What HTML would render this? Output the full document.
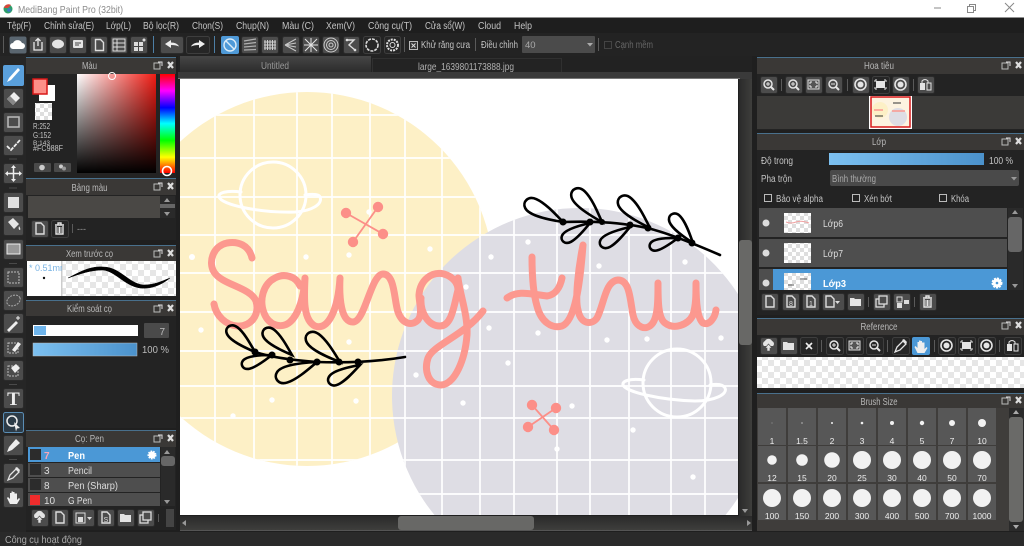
<!DOCTYPE html>
<html><head><meta charset="utf-8"><title>MediBang Paint Pro</title>
<style>
html,body{margin:0;padding:0;background:#1f1f1f;overflow:hidden;width:1024px;height:546px}
svg{display:block;overflow:hidden;font-family:"Liberation Sans","Noto Sans CJK SC",sans-serif}
text{font-size:10px;fill:#c4c4c4}
.b{fill:#4c4c4c;stroke:#2b2b2b;stroke-width:1}
.d{fill:#262626;stroke:#3e3e3e;stroke-width:1}
.t{fill:#3a3836}
.c{text-anchor:middle;fill:#b8b8b8}
.s{text-anchor:middle;font-size:8.5px;fill:#eee}
.w{fill:#fff}
.k{fill:none;stroke:#000;stroke-width:2.6;stroke-linecap:round;vector-effect:non-scaling-stroke}
.sep{fill:#5a5a5a}
</style></head><body>
<svg width="1024" height="546" viewBox="0 0 1024 546" xmlns="http://www.w3.org/2000/svg">
<defs>
<linearGradient id="sv" x1="0" x2="1" y1="0" y2="0"><stop offset="0" stop-color="#fff"/><stop offset="1" stop-color="#f01c14"/></linearGradient>
<linearGradient id="bk" x1="0" x2="0" y1="0" y2="1"><stop offset="0" stop-color="#000" stop-opacity="0"/><stop offset="1" stop-color="#000"/></linearGradient>
<linearGradient id="hue" x1="0" x2="0" y1="0" y2="1"><stop offset="0" stop-color="#f00"/><stop offset=".17" stop-color="#f0f"/><stop offset=".34" stop-color="#00f"/><stop offset=".5" stop-color="#0ff"/><stop offset=".67" stop-color="#0f0"/><stop offset=".84" stop-color="#ff0"/><stop offset="1" stop-color="#f00"/></linearGradient>
<linearGradient id="bl" x1="0" x2="1" y1="0" y2="0"><stop offset="0" stop-color="#7cc0f0"/><stop offset="1" stop-color="#4b92cc"/></linearGradient>
<linearGradient id="sb" x1="0" x2="0" y1="0" y2="1"><stop offset="0" stop-color="#2a2a2a"/><stop offset="1" stop-color="#3e3e3c"/></linearGradient>
<linearGradient id="tab" x1="0" x2="0" y1="0" y2="1"><stop offset="0" stop-color="#464646"/><stop offset="1" stop-color="#2c2c2c"/></linearGradient>
<linearGradient id="sbv" x1="0" x2="1" y1="0" y2="0"><stop offset="0" stop-color="#2a2a2a"/><stop offset="1" stop-color="#3e3e3c"/></linearGradient>
<pattern id="ch" width="12" height="12" patternUnits="userSpaceOnUse"><rect width="12" height="12" fill="#fff"/><rect width="6" height="6" fill="#e6e6e6"/><rect x="6" y="6" width="6" height="6" fill="#e6e6e6"/></pattern>
<pattern id="ch2" width="8" height="8" patternUnits="userSpaceOnUse"><rect width="8" height="8" fill="#fff"/><rect width="4" height="4" fill="#dedede"/><rect x="4" y="4" width="4" height="4" fill="#dedede"/></pattern>
<g id="pt"><rect x="0" y="1" width="6" height="6" fill="none" stroke="#bbb"/><path d="M4 0h4v4" fill="none" stroke="#ddd"/><path d="M14 0l5 6M19 0l-5 6" stroke="#ddd" stroke-width="2.2"/></g>
<path id="leaf" d="M0 0C-20-8-55-24-80-24C-102-24-108-4-96 6C-80 20-30 8 0 0Z" class="k"/>
<g id="doc"><path d="M5 3h5l3 3v8H5z" fill="none" stroke="#ddd" stroke-width="1.4"/></g>
<g id="zp"><circle cx="8" cy="8" r="4" fill="none" stroke="#e4e4e4" stroke-width="1.5"/><path d="M11 11l3 3" stroke="#e4e4e4" stroke-width="2"/><path d="M6 8h4M8 6v4" stroke="#e4e4e4"/></g>
<g id="zm"><circle cx="8" cy="8" r="4" fill="none" stroke="#e4e4e4" stroke-width="1.5"/><path d="M11 11l3 3" stroke="#e4e4e4" stroke-width="2"/><path d="M6 8h4" stroke="#e4e4e4"/></g>
<g id="fit"><rect x="3" y="4" width="11" height="9" fill="#555" stroke="#ddd"/><path d="M5 6h2M5 6v2M12 6h-2M12 6v2M5 11h2M5 11v-2M12 11h-2M12 11v-2" stroke="#eee"/></g>
<g id="rl"><circle cx="8.5" cy="8.5" r="5.5" fill="none" stroke="#e4e4e4" stroke-width="1.6"/><circle cx="8.5" cy="8.5" r="3" fill="#e4e4e4"/></g>
<g id="fr"><rect x="4" y="5" width="9" height="7" fill="#e4e4e4"/><path d="M3 4h2M3 4v2M14 4h-2M14 4v2M3 13h2M3 13v-2M14 13h-2M14 13v-2" stroke="#e4e4e4"/></g>
<g id="fl"><rect x="3" y="7" width="5" height="7" fill="#e4e4e4"/><rect x="10" y="7" width="4" height="7" fill="none" stroke="#e4e4e4"/><path d="M5 7V5q3-3 6 0v2" fill="none" stroke="#e4e4e4"/></g>
<g id="fold"><path d="M3 5h4l1 1h6v7H3z" fill="#e4e4e4"/></g>
<g id="dup"><rect x="3" y="6" width="8" height="8" fill="none" stroke="#ddd" stroke-width="1.3"/><rect x="6" y="3" width="8" height="8" fill="#4c4c4c" stroke="#ddd" stroke-width="1.3"/></g>
<g id="up"><path d="M4 9a3 3 0 0 1 1-5a4 4 0 0 1 7 0a3 3 0 0 1 1 5z" fill="#e4e4e4"/><path d="M8.5 7l3.5 4h-2v3h-3v-3H5z" fill="#e4e4e4" stroke="#4c4c4c" stroke-width=".6"/></g>
<g id="tr"><path d="M4 5h9M7 5V3h3v2M5 6v8h7V6" fill="none" stroke="#e4e4e4" stroke-width="1.4"/><path d="M7 7v6M8.5 7v6M10 7v6" stroke="#e4e4e4"/></g>
<g id="hand"><path d="M5 15L2 9l1-1 2 2V4h1.5v4V2.500h1.500V8V3h1.500v5V4.500H12V11l2-2 1 1-3 5z" fill="#eee"/></g>
<g id="dr"><path d="M3 15l2-5 6-6 3 3-6 6z" fill="none" stroke="#e4e4e4" stroke-width="1.3"/><path d="M10 3l2-1 3 3-1 2z" fill="#e4e4e4"/></g>
</defs>

<!-- base -->
<rect width="1024" height="546" fill="#1f1f1f"/>
<rect width="1024" height="17.500" fill="#fff"/>
<circle cx="8" cy="9" r="4.500" fill="#2e9e6a"/><path d="M4 8a4.500 4.500 0 0 1 7-3l-3 3z" fill="#d9453a"/><circle cx="9" cy="10" r="1.800" fill="#3a78c8"/>
<text x="18" y="13" textLength="105" lengthAdjust="spacingAndGlyphs" style="font-size:10px;fill:#8c8c8c">MediBang Paint Pro (32bit)</text>
<path d="M934 8h7" stroke="#888"/><rect x="967.500" y="6.500" width="6" height="6" fill="none" stroke="#888"/><path d="M969.500 6.500v-2h6v6h-2" fill="none" stroke="#888"/><path d="M1005 3l9 9M1014 3l-9 9" stroke="#888"/>

<!-- menu -->
<rect y="18" width="1024" height="15" fill="#1e1e1e"/>
<text x="7" y="29" textLength="24" lengthAdjust="spacingAndGlyphs">Tệp(F)</text><text x="44" y="29" textLength="50" lengthAdjust="spacingAndGlyphs">Chỉnh sửa(E)</text><text x="106" y="29" textLength="25" lengthAdjust="spacingAndGlyphs">Lớp(L)</text><text x="143" y="29" textLength="36" lengthAdjust="spacingAndGlyphs">Bộ lọc(R)</text><text x="192" y="29" textLength="31" lengthAdjust="spacingAndGlyphs">Chọn(S)</text><text x="236" y="29" textLength="33" lengthAdjust="spacingAndGlyphs">Chụp(N)</text><text x="282" y="29" textLength="32" lengthAdjust="spacingAndGlyphs">Màu (C)</text><text x="326" y="29" textLength="29" lengthAdjust="spacingAndGlyphs">Xem(V)</text><text x="368" y="29" textLength="44" lengthAdjust="spacingAndGlyphs">Công cụ(T)</text><text x="425" y="29" textLength="40" lengthAdjust="spacingAndGlyphs">Cửa sổ(W)</text><text x="478" y="29" textLength="23" lengthAdjust="spacingAndGlyphs">Cloud</text><text x="514" y="29" textLength="18" lengthAdjust="spacingAndGlyphs">Help</text>

<!-- toolbar -->
<rect y="33" width="1024" height="23" fill="#232323"/>
<rect x="3" y="36" width="1" height="17" class="sep"/>
<rect x="9.500" y="36.500" width="17" height="17" rx="2" fill="#5a6670"/><path d="M13 49a3 3 0 0 1 0-6a5 5 0 0 1 9 0a3 3 0 0 1 0 6z" fill="#fff"/>
<rect x="29.500" y="36.500" width="17" height="17" rx="2" class="b"/><path d="M34 42v8h8v-8M38 46v-7M35.500 41l2.500-2.500 2.500 2.500" fill="none" stroke="#e8e8e8" stroke-width="1.300"/>
<rect x="49.500" y="36.500" width="17" height="17" rx="2" class="b"/><ellipse cx="58" cy="44" rx="6" ry="4.500" fill="#e4e4e4"/>
<rect x="69.500" y="36.500" width="17" height="17" rx="2" class="b"/><rect x="73" y="40" width="10" height="8" rx="1" fill="#e4e4e4"/><path d="M75 43h6M75 45h4" stroke="#444"/>
<rect x="90.500" y="36.500" width="17" height="17" rx="2" class="b"/><use href="#doc" x="90.500" y="36.500"/>
<rect x="110.500" y="36.500" width="17" height="17" rx="2" class="b"/><rect x="113" y="39" width="12" height="12" fill="none" stroke="#ddd"/><path d="M113 43h12M113 47h12M117 39v12" stroke="#ddd"/>
<rect x="130.500" y="36.500" width="17" height="17" rx="2" class="b"/><rect x="134" y="42" width="9" height="9" fill="#ddd"/><path d="M134 46.500h9M138.500 42v9" stroke="#444"/><circle cx="144" cy="40" r="1.500" fill="#ddd"/>
<rect x="153" y="36" width="1" height="17" fill="#4d7fa6"/>
<rect x="160.500" y="36.500" width="23" height="17" rx="2" class="b"/><path d="M165 44l6-4v2.500q6 0 8 4q-3-1.500-8-1.500V48z" fill="#eee"/>
<rect x="186.500" y="36.500" width="23" height="17" rx="2" class="d"/><path d="M205 44l-6-4v2.500q-6 0-8 4q3-1.500 8-1.500V48z" fill="#eee"/>
<rect x="214" y="36" width="1" height="17" fill="#4d7fa6"/>
<rect x="221" y="36" width="18" height="18" rx="2" fill="#4f9ad8"/><circle cx="230" cy="45" r="6" fill="none" stroke="#dcecf8" stroke-width="1.400"/><path d="M226 41l8 8" stroke="#dcecf8" stroke-width="1.400"/>
<rect x="241.500" y="36.500" width="17" height="17" rx="2" class="b"/><path d="M244 41l12-2M244 44l12-1.500M244 47l12-1M244 50l12-.5" stroke="#b0b0b0" stroke-width="1.200"/>
<rect x="261.500" y="36.500" width="17" height="17" rx="2" class="b"/><path d="M265 40v10M267.500 40v10M270 40v10M272.500 40v10M275 40v10M264 42h12M264 45h12M264 48h12" stroke="#d0d0d0"/>
<rect x="282.500" y="36.500" width="17" height="17" rx="2" class="b"/><path d="M285 45l11-6M285 45l11-2M285 45l11 2M285 45l11 6" stroke="#c8c8c8"/>
<rect x="302.500" y="36.500" width="17" height="17" rx="2" class="b"/><path d="M311 45l-6-6M311 45l6-6M311 45l-6 6M311 45l6 6M304 45h14M311 38v14" stroke="#e4e4e4"/>
<rect x="322.500" y="36.500" width="17" height="17" rx="2" class="b"/><circle cx="331" cy="45" r="7" fill="none" stroke="#ccc"/><circle cx="331" cy="45" r="4.500" fill="none" stroke="#ccc"/><circle cx="331" cy="45" r="2" fill="none" stroke="#ccc"/>
<rect x="343.500" y="36.500" width="16" height="17" rx="2" class="b"/><path d="M347 40h7l-5 5 6 5" fill="none" stroke="#ddd" stroke-width="1.400"/><circle cx="347" cy="40" r="1.300" fill="#ddd"/><circle cx="355" cy="50" r="1.300" fill="#ddd"/>
<rect x="363.500" y="36.500" width="17" height="17" rx="2" class="d"/><circle cx="372" cy="45" r="6" fill="none" stroke="#ddd" stroke-width="1.600" stroke-dasharray="3 1"/>
<rect x="384.500" y="36.500" width="16" height="17" rx="2" class="d"/><circle cx="392.500" cy="45" r="5.500" fill="none" stroke="#ddd" stroke-width="2" stroke-dasharray="2 1"/><circle cx="392.500" cy="45" r="2.500" fill="none" stroke="#ddd"/>
<rect x="404" y="37" width="1" height="15" class="sep"/>
<rect x="409.500" y="41.500" width="8" height="8" fill="#333" stroke="#bbb"/><path d="M411.500 43.500l4 4M415.500 43.500l-4 4" stroke="#ddd"/>
<text x="421" y="48" textLength="49" lengthAdjust="spacingAndGlyphs">Khử răng cưa</text>
<rect x="475" y="38" width="1" height="13" class="sep"/>
<text x="481" y="48" textLength="37" lengthAdjust="spacingAndGlyphs">Điều chỉnh</text>
<rect x="522" y="36" width="73" height="17" rx="1" fill="#4b4b4b"/><text x="525" y="48" style="fill:#aaa;font-size:9.500px">40</text><path d="M587 43h6l-3 3.500z" fill="#aaa"/>
<rect x="598" y="38" width="1" height="13" class="sep"/>
<rect x="604.500" y="41.500" width="7" height="7" fill="none" stroke="#444"/><text x="615" y="48" textLength="38" lengthAdjust="spacingAndGlyphs" style="fill:#666">Cạnh mềm</text>

<!-- tabs -->
<rect x="178" y="56" width="574" height="16" fill="#222"/>
<rect x="180" y="56" width="191" height="16" fill="url(#tab)"/>
<text x="261" y="69" textLength="28" lengthAdjust="spacingAndGlyphs" style="fill:#999">Untitled</text>
<rect x="372.500" y="58.500" width="189" height="14" fill="#232323" stroke="#303030"/>
<text x="418" y="70" textLength="96" lengthAdjust="spacingAndGlyphs" style="fill:#b0b0b0">large_1639801173888.jpg</text>
<rect x="178" y="72" width="574" height="7" fill="#3a3a3a"/>
<rect x="178" y="78" width="562" height="1" fill="#777"/>

<!-- canvas -->
<svg x="180" y="79" width="558" height="436" viewBox="180 79 558 436">
<rect x="180" y="79" width="558" height="436" fill="#fff"/>
<clipPath id="cc"><circle cx="307" cy="279" r="187"/><path d="M434.500 515A188 188 0 1 1 725.500 515Z"/></clipPath>
<circle cx="307" cy="279" r="187" fill="#fdf0c6"/>
<path d="M434.500 515A188 188 0 1 1 725.500 515Z" fill="#dedde4"/>
<g clip-path="url(#cc)" stroke="#fff" stroke-width="1.700">
<path d="M215 79V515M254 79V515M297 79V515M332 79V515M370 79V515M405 79V515M442 79V515M480 79V515M514 79V515M557 79V515M590 79V515M629 79V515M671 79V515M705 79V515"/>
<path d="M180 115H738M180 158H738M180 197H738M180 235H738M180 273H738M180 312H738M180 351H738M180 386H738M180 418H738M180 460H738M180 494H738"/>
</g>
<!-- dots -->
<g class="w">
<circle cx="192" cy="257" r="3"/><circle cx="306" cy="257" r="2.700"/><circle cx="349" cy="255" r="2.700"/><circle cx="430" cy="249" r="2.700"/><circle cx="369" cy="212" r="2.700"/><circle cx="466" cy="287" r="2.700"/><circle cx="491" cy="257" r="2.700"/><circle cx="528" cy="242" r="2.700"/><circle cx="599" cy="266" r="2.700"/><circle cx="685" cy="262" r="2.700"/><circle cx="489" cy="328" r="2.700"/><circle cx="538" cy="333" r="2.700"/><circle cx="607" cy="340" r="2.700"/><circle cx="647" cy="339" r="2.700"/><circle cx="721" cy="338" r="2.700"/><circle cx="201" cy="330" r="2.700"/><circle cx="349" cy="342" r="2.700"/><circle cx="272" cy="400" r="2.700"/><circle cx="356" cy="401" r="2.700"/><circle cx="233" cy="416" r="2.700"/><circle cx="416" cy="375" r="2.700"/><circle cx="463" cy="403" r="2.700"/><circle cx="508" cy="363" r="2.700"/><circle cx="572" cy="406" r="2.700"/><circle cx="633" cy="430" r="2.700"/><circle cx="557" cy="449" r="2.700"/><circle cx="693" cy="477" r="2.700"/>
</g>
<!-- planets -->
<g fill="none" stroke="#fff" stroke-width="3" stroke-linecap="round">
<circle cx="273" cy="195" r="33"/>
<path d="M241 192C226 190 218 193 219 197C222 205 260 213 295 212C312 211 323 204 320 197C319 194 312 194 305 195"/>
<circle cx="677" cy="383" r="34"/>
<path d="M644 380C630 378 622 381 623 385C626 392 660 400 695 401C715 401 728 394 725 388C723 384 716 384 710 385"/>
</g>
<!-- x marks -->
<g stroke="#fc8f88" stroke-width="1.800" fill="#fc8f88">
<path d="M346 213L383 234M378 207L353 242"/><circle cx="346" cy="213" r="4.300"/><circle cx="378" cy="207" r="4.300"/><circle cx="383" cy="234" r="4.300"/><circle cx="353" cy="242" r="4.300"/>
<path d="M532 405L554 430M556 408L528 427"/><circle cx="532" cy="405" r="4.300"/><circle cx="556" cy="408" r="4.300"/><circle cx="528" cy="427" r="4.300"/><circle cx="554" cy="430" r="4.300"/>
</g>
<!-- lettering -->
<g fill="none" stroke="#fc988f" stroke-width="7" stroke-linecap="round" stroke-linejoin="round">
<path d="M252 258C249 245 238 241 227 243C213 246 208 262 214 272C222 285 250 287 256 301C260 316 250 327 237 326C226 325 216 316 214 304"/>
<path d="M300 286C296 276 284 273 275 278C263 284 259 300 264 313C269 326 282 329 290 322C299 314 304 296 305 278C304 298 303 320 315 326C328 331 338 310 340 278C339 298 341 322 353 322C365 322 371 274 383 274C395 274 394 300 398 312C402 323 411 327 418 320C423 314 419 302 419 295C420 280 432 271 444 274C454 277 458 284 458 290C454 305 452 326 440 326C428 326 420 312 421 298"/>
<path d="M458 278C460 295 468 315 467 335C465 360 455 384 441 385C428 385 424 370 428 358C433 345 465 335 483 311"/>
<path d="M507 298C518 290 530 294 547 296C555 295 560 288 562 278"/>
<path d="M532 257C532 280 534 296 537 306C541 322 552 329 562 326C575 321 580 285 583 245C578 270 575 300 578 310C581 325 592 325 597 318C604 305 605 281 618 280C630 280 630 300 633 315C636 328 646 331 652 324C658 317 658 300 658 283C658 300 658 318 665 323C674 330 688 325 693 315C696 305 696 295 696 283C696 300 697 318 703 323C709 326 715 318 716 310"/>
</g>
<!-- leaves -->
<g fill="none">
<path d="M563 222C590 221 620 222 647 228C665 232 690 242 720 255" class="k"/>
<path d="M255 352C270 357 290 360 317 362C345 363 375 362 405 357" class="k"/>
<use href="#leaf" transform="translate(563 222) rotate(24) scale(.42)"/>
<use href="#leaf" transform="translate(602 222) rotate(44) scale(.42)"/>
<use href="#leaf" transform="translate(590 223) rotate(-28) scale(.32) scale(1 -1)"/>
<use href="#leaf" transform="translate(650 228) rotate(41) scale(.42)"/>
<use href="#leaf" transform="translate(630 227) rotate(-28) scale(.34) scale(1 -1)"/>
<use href="#leaf" transform="translate(693 243) rotate(48) scale(.35)"/>
<use href="#leaf" transform="translate(678 238) rotate(-14) scale(.29) scale(1 -1)"/>
<use href="#leaf" transform="translate(255 352) rotate(38) scale(.36)"/>
<use href="#leaf" transform="translate(272 355) rotate(-15) scale(.31) scale(1 -1)"/>
<use href="#leaf" transform="translate(292 355) rotate(38) scale(.37)"/>
<use href="#leaf" transform="translate(317 362) rotate(-18) scale(.43) scale(1 -1)"/>
<use href="#leaf" transform="translate(340 362) rotate(36) scale(.42)"/>
<use href="#leaf" transform="translate(360 365) rotate(-25) scale(.35) scale(1 -1)"/>
</g>
<g fill="#000"><circle cx="563" cy="222" r="3.500"/><circle cx="590" cy="222" r="3.500"/><circle cx="602" cy="222" r="3"/><circle cx="630" cy="225" r="3.500"/><circle cx="648" cy="228" r="3.500"/><circle cx="678" cy="238" r="3.500"/><circle cx="692" cy="243" r="3.500"/><circle cx="255" cy="352" r="3.500"/><circle cx="272" cy="355" r="3.500"/><circle cx="290" cy="360" r="3.500"/><circle cx="317" cy="362" r="3.500"/><circle cx="339" cy="362" r="3.500"/><circle cx="358" cy="362" r="3.500"/></g>
</svg>

<!-- scrollbars -->
<rect x="739" y="79" width="13" height="437" fill="url(#sbv)"/>
<rect x="739" y="240" width="13" height="105" rx="3" fill="#686866"/>
<path d="M742 509h6l-3 4z" fill="#999"/>
<rect x="180" y="516" width="572" height="14" fill="url(#sb)"/>
<rect x="398" y="516" width="136" height="14" rx="3" fill="#686866"/>
<path d="M186 520v6l-4-3z" fill="#999"/><path d="M747 520v6l4-3z" fill="#999"/>
<rect x="180" y="530" width="572" height="1" fill="#555"/>

<!-- status -->
<rect y="532" width="1024" height="14" fill="#2a2a2a"/>
<text x="5" y="543" textLength="77" lengthAdjust="spacingAndGlyphs" style="fill:#aaa">Công cụ hoạt động</text>

<!-- left tools -->
<rect x="0" y="56" width="26" height="476" fill="#262626"/>
<rect x="3" y="65" width="21" height="21" rx="2" fill="#5aa0dc"/>
<path d="M7 82l2-4 9-10 2 2-9 10z" fill="#fff"/>
<g class="b">
<rect x="3.500" y="88.500" width="20" height="20" rx="2"/><rect x="3.500" y="112.500" width="20" height="20" rx="2"/><rect x="3.500" y="135.500" width="20" height="20" rx="2"/><rect x="3.500" y="163.500" width="20" height="20" rx="2"/><rect x="3.500" y="192.500" width="20" height="20" rx="2"/><rect x="3.500" y="215.500" width="20" height="20" rx="2"/><rect x="3.500" y="239.500" width="20" height="20" rx="2"/><rect x="3.500" y="267.500" width="20" height="20" rx="2"/><rect x="3.500" y="290.500" width="20" height="20" rx="2"/><rect x="3.500" y="313.500" width="20" height="20" rx="2"/><rect x="3.500" y="337.500" width="20" height="20" rx="2"/><rect x="3.500" y="360.500" width="20" height="20" rx="2"/><rect x="3.500" y="388.500" width="20" height="20" rx="2"/><rect x="3.500" y="435.500" width="20" height="20" rx="2"/><rect x="3.500" y="463.500" width="20" height="20" rx="2"/><rect x="3.500" y="487.500" width="20" height="20" rx="2"/>
</g>
<rect x="3.500" y="412.500" width="20" height="20" rx="2" fill="#2c3b47" stroke="#5a8db5"/>
<g fill="#4a4a4a"><rect x="9" y="158.500" width="8" height="1"/><rect x="9" y="187.500" width="8" height="1"/><rect x="9" y="263" width="8" height="1"/><rect x="9" y="384" width="8" height="1"/><rect x="9" y="459" width="8" height="1"/></g>
<path d="M7 99l7-7 6 6-7 7z" fill="#eee"/><path d="M7 99l3-3 6 6-3 3z" fill="#888"/>
<rect x="8" y="117" width="11" height="10" fill="none" stroke="#bbb" stroke-width="1.500"/>
<path d="M7 146l4 4 9-10" fill="none" stroke="#eee" stroke-width="1.800" stroke-dasharray="4 1"/>
<path d="M13.500 166v15M6 173.500h15" stroke="#eee" stroke-width="1.500"/><path d="M13.500 165l-2.500 3h5zM13.500 182l-2.500-3h5zM5 173.500l3-2.500v5zM22 173.500l-3-2.500v5z" fill="#eee"/>
<rect x="8" y="197" width="11" height="11" fill="#e0e0e0"/>
<path d="M8 222l5-4 6 6-5 5zM19 226q2 3 1 4q-2 0-1-4z" fill="#e4e4e4"/>
<rect x="7" y="244" width="13" height="10" fill="#999" stroke="#eee"/>
<rect x="8" y="272" width="11" height="11" fill="none" stroke="#bbb" stroke-dasharray="2 1"/>
<ellipse cx="13.500" cy="300.500" rx="7" ry="5" transform="rotate(-25 13.500 300.500)" fill="none" stroke="#aaa" stroke-dasharray="2 1"/>
<path d="M7 330l9-9 2 2-9 9z" fill="#eee"/><path d="M18 316v4M16 318h4" stroke="#eee"/>
<rect x="8" y="343" width="10" height="10" fill="none" stroke="#bbb" stroke-dasharray="2 1"/><path d="M12 350l6-8 3 2-6 8z" fill="#eee"/>
<rect x="8" y="366" width="10" height="10" fill="none" stroke="#bbb" stroke-dasharray="2 1"/><path d="M11 368l5-4 4 4-5 5z" fill="#eee"/>
<text x="13.500" y="405" style="font-family:'Liberation Serif',serif;font-size:19px;font-weight:bold;fill:#eee;text-anchor:middle">T</text>
<circle cx="12" cy="421" r="5" fill="none" stroke="#eee" stroke-width="1.500"/><path d="M14 422l6 6-3 .5-1 3z" fill="#eee"/>
<path d="M7 452l2-5 7-8 4 4-8 7z" fill="#eee"/>
<use href="#dr" x="5" y="465"/>
<use href="#hand" x="5" y="489"/>

<!-- Màu panel -->
<rect x="26" y="57" width="150" height="121" fill="#232323"/>
<rect x="26" y="57" width="150" height="17" class="t"/><rect x="26" y="57" width="150" height="1" fill="#49708c"/>
<text x="89.500" y="69" class="c" textLength="15" lengthAdjust="spacingAndGlyphs">Màu</text><use href="#pt" x="154" y="62"/>
<rect x="39" y="85" width="16" height="16" fill="#fff"/>
<rect x="33" y="79" width="14" height="15" fill="#fc8f88" stroke="#d81818" stroke-width="1.500"/>
<rect x="35" y="103" width="17" height="17" fill="url(#ch2)"/>
<text x="33" y="129" textLength="17" lengthAdjust="spacingAndGlyphs" style="font-size:8.500px">R:252</text><text x="33" y="138" textLength="18" lengthAdjust="spacingAndGlyphs" style="font-size:8.500px">G:152</text><text x="33" y="145" style="font-size:6.500px">B:143</text><text x="33" y="151" textLength="30" lengthAdjust="spacingAndGlyphs" style="font-size:8.500px">#FC988F</text>
<rect x="34" y="163" width="17" height="9" rx="1" fill="#4a4a4a"/><circle cx="42" cy="167.500" r="2.800" fill="#ccc"/>
<rect x="54" y="163" width="17" height="9" rx="1" fill="#4a4a4a"/><circle cx="61" cy="166.500" r="2" fill="#ccc"/><circle cx="64" cy="168.500" r="2" fill="#999"/>
<rect x="77" y="74" width="79" height="99" fill="url(#sv)"/><rect x="77" y="74" width="79" height="99" fill="url(#bk)"/>
<circle cx="112" cy="76" r="3.500" fill="none" stroke="#fff"/>
<rect x="160" y="74" width="15" height="99" fill="url(#hue)"/>
<circle cx="167" cy="171" r="4.500" fill="none" stroke="#fff" stroke-width="1.600"/>

<!-- Bảng màu -->
<rect x="26" y="178" width="150" height="62" fill="#232323"/>
<rect x="26" y="178" width="150" height="17" class="t"/><rect x="26" y="178" width="150" height="1" fill="#49708c"/>
<text x="89.500" y="191" class="c" textLength="36" lengthAdjust="spacingAndGlyphs">Bảng màu</text><use href="#pt" x="154" y="183"/>
<rect x="28" y="196" width="132" height="22" fill="#4a4845"/>
<rect x="160" y="196" width="15" height="22" fill="#2a2a2a"/><rect x="160" y="204" width="15" height="4" fill="#666"/>
<path d="M164 202h6l-3-4zM164 212h6l-3 4z" fill="#999"/>
<rect x="31.500" y="220.500" width="17" height="17" rx="2" class="b"/><use href="#doc" x="31" y="220"/>
<rect x="51.500" y="220.500" width="17" height="17" rx="2" class="d"/><use href="#tr" x="51" y="220"/>
<rect x="72" y="224" width="1" height="9" class="sep"/><text x="77" y="232" style="fill:#999;font-size:9px">---</text>

<!-- Xem trước cọ -->
<rect x="26" y="245" width="150" height="52" fill="#232323"/>
<rect x="26" y="245" width="150" height="16" class="t"/><rect x="26" y="245" width="150" height="1" fill="#49708c"/>
<text x="89.500" y="257" class="c" textLength="47" lengthAdjust="spacingAndGlyphs">Xem trước cọ</text><use href="#pt" x="154" y="250"/>
<rect x="27" y="261" width="35" height="35" fill="#fff"/><rect x="62" y="261" width="114" height="35" fill="url(#ch)"/>
<rect x="61" y="261" width="1.500" height="35" fill="#ccc"/>
<svg x="27" y="261" width="35" height="35"><text x="2" y="10" style="fill:#7ab4e4;font-size:9px">* 0.51mm</text></svg>
<circle cx="44" cy="278" r="1.200" fill="#111"/>
<path d="M68 278C80 272 90 266 103 267C120 267 128 283 143 285C155 285 162 281 170 278C160 286 150 289 140 288C125 286 115 271 103 270C90 270 80 274 68 278Z" fill="#000" stroke="#000" stroke-width=".5"/>

<!-- Kiểm soát cọ -->
<rect x="26" y="300" width="150" height="128" fill="#232323"/>
<rect x="26" y="300" width="150" height="16" class="t"/><rect x="26" y="300" width="150" height="1" fill="#49708c"/>
<text x="89.500" y="312" class="c" textLength="45" lengthAdjust="spacingAndGlyphs">Kiểm soát cọ</text><use href="#pt" x="154" y="305"/>
<rect x="33" y="325" width="105" height="11" fill="#fff"/><rect x="34" y="326" width="12" height="9" fill="#6fb5ec"/>
<rect x="144" y="323" width="25" height="15" rx="1" fill="#4a4a4a"/><text x="165" y="335" style="text-anchor:end;fill:#bbb">7</text>
<rect x="33" y="343" width="104" height="13" fill="url(#bl)" stroke="#bbb" stroke-width=".5"/>
<text x="142" y="353" textLength="27" lengthAdjust="spacingAndGlyphs" style="fill:#bbb">100 %</text>

<!-- Cọ: Pen -->
<rect x="26" y="430" width="150" height="100" fill="#232323"/>
<rect x="26" y="430" width="150" height="17" class="t"/><rect x="26" y="430" width="150" height="1" fill="#49708c"/>
<text x="89.500" y="442" class="c" textLength="29" lengthAdjust="spacingAndGlyphs">Cọ: Pen</text><use href="#pt" x="154" y="435"/>
<rect x="28" y="447" width="132" height="15" fill="#4b98d6"/>
<rect x="28" y="463" width="132" height="14" fill="#4e4e4e"/><rect x="28" y="478" width="132" height="14" fill="#4e4e4e"/><rect x="28" y="493" width="132" height="13" fill="#4e4e4e"/>
<rect x="30" y="449" width="11" height="11" fill="#2c2c2c"/><rect x="30" y="464" width="11" height="11" fill="#2c2c2c"/><rect x="30" y="479" width="11" height="11" fill="#2c2c2c"/><rect x="30" y="495" width="10" height="10" fill="#f02c2c"/>
<text x="44" y="459" style="fill:#f8a8b8;font-weight:bold">7</text><text x="68" y="459" textLength="17" lengthAdjust="spacingAndGlyphs" style="fill:#fff;font-weight:bold">Pen</text><text x="44" y="474" style="fill:#ddd">3</text><text x="68" y="474" textLength="24" lengthAdjust="spacingAndGlyphs" style="fill:#ddd">Pencil</text><text x="44" y="489" style="fill:#ddd">8</text><text x="68" y="489" textLength="50" lengthAdjust="spacingAndGlyphs" style="fill:#ddd">Pen (Sharp)</text><text x="44" y="504" style="fill:#ddd">10</text><text x="68" y="504" textLength="24" lengthAdjust="spacingAndGlyphs" style="fill:#ddd">G Pen</text>
<circle cx="152" cy="455" r="3.500" fill="#fff" stroke="#fff" stroke-width="2" stroke-dasharray="1.500 1"/>
<rect x="161" y="447" width="14" height="59" fill="#2a2a2a"/><rect x="161" y="456" width="14" height="10" rx="3" fill="#666"/>
<path d="M164 454h6l-3-4zM164 500h6l-3 4z" fill="#999"/>
<rect x="31.500" y="509.500" width="17" height="17" rx="2" class="b"/><use href="#up" x="31" y="509"/>
<rect x="51.500" y="509.500" width="17" height="17" rx="2" class="b"/><use href="#doc" x="51" y="509"/>
<rect x="72.500" y="509.500" width="22" height="17" rx="2" class="b"/><rect x="76" y="513" width="9" height="10" fill="none" stroke="#ddd"/><rect x="78" y="517" width="5" height="5" fill="#ddd"/><path d="M87 517h5l-2.500 3z" fill="#ddd"/>
<rect x="97.500" y="509.500" width="17" height="17" rx="2" class="b"/><use href="#doc" x="97" y="509"/><text x="106" y="522" style="font-size:7px;text-anchor:middle;fill:#ddd">S</text>
<rect x="117.500" y="509.500" width="17" height="17" rx="2" class="b"/><use href="#fold" x="117" y="509"/>
<rect x="137.500" y="509.500" width="17" height="17" rx="2" class="b"/><use href="#dup" x="137" y="509"/>
<rect x="158" y="514" width="1" height="8" class="sep"/><rect x="166" y="509" width="8" height="18" fill="#444"/>

<!-- Hoa tiêu -->
<rect x="757" y="57" width="267" height="73" fill="#232323"/>
<rect x="757" y="57" width="267" height="17" class="t"/><rect x="757" y="57" width="267" height="1" fill="#49708c"/>
<text x="879" y="69" class="c" textLength="30" lengthAdjust="spacingAndGlyphs">Hoa tiêu</text><use href="#pt" x="1002" y="62"/>
<rect x="760.500" y="76.500" width="17" height="17" rx="2" class="b"/><use href="#zp" x="760" y="76"/>
<rect x="781" y="79" width="1" height="12" class="sep"/>
<rect x="785.500" y="76.500" width="17" height="17" rx="2" class="b"/><use href="#zp" x="785" y="76"/>
<rect x="805.500" y="76.500" width="17" height="17" rx="2" class="b"/><use href="#fit" x="805" y="76"/>
<rect x="825.500" y="76.500" width="17" height="17" rx="2" class="b"/><use href="#zm" x="825" y="76"/>
<rect x="847" y="79" width="1" height="12" class="sep"/>
<rect x="852.500" y="76.500" width="17" height="17" rx="2" class="b"/><use href="#rl" x="852" y="76"/>
<rect x="872.500" y="76.500" width="17" height="17" rx="2" class="d"/><use href="#fr" x="872" y="76"/>
<rect x="892.500" y="76.500" width="17" height="17" rx="2" class="b"/><use href="#rl" x="892" y="76"/>
<rect x="913" y="79" width="1" height="12" class="sep"/>
<rect x="917.500" y="76.500" width="17" height="17" rx="2" class="b"/><use href="#fl" x="917" y="76"/>
<rect x="757" y="96" width="267" height="33" fill="#3b3a38"/>
<rect x="869" y="96" width="43" height="33" fill="#fff"/>
<rect x="871" y="97" width="39" height="30" fill="#fdf3e0" stroke="#d81818" stroke-width="1.500"/>
<circle cx="880" cy="110" r="8" fill="#fdf0c6"/><circle cx="898" cy="117" r="9" fill="#dedde4"/>
<path d="M874 110h9M892 111h13" stroke="#fc988f" stroke-width="1.500"/><path d="M893 103h8M875 116h8" stroke="#333" stroke-width="1"/>

<!-- Lớp -->
<rect x="757" y="133" width="267" height="182" fill="#232323"/>
<rect x="757" y="133" width="267" height="17" class="t"/><rect x="757" y="133" width="267" height="1" fill="#49708c"/>
<text x="879" y="145" class="c" textLength="14" lengthAdjust="spacingAndGlyphs">Lớp</text><use href="#pt" x="1002" y="138"/>
<text x="761" y="164" textLength="32" lengthAdjust="spacingAndGlyphs">Độ trong</text>
<rect x="829" y="153" width="155" height="12" fill="url(#bl)"/><text x="989" y="164" textLength="24" lengthAdjust="spacingAndGlyphs">100 %</text>
<text x="761" y="182" textLength="31" lengthAdjust="spacingAndGlyphs">Pha trộn</text>
<rect x="830" y="170" width="189" height="16" rx="2" fill="#4a4a4a"/><text x="832" y="182" textLength="44" lengthAdjust="spacingAndGlyphs" style="fill:#aaa">Bình thường</text><path d="M1011 177h6l-3 3.500z" fill="#999"/>
<g fill="none" stroke="#bbb"><rect x="764.500" y="194.500" width="7" height="7"/><rect x="852.500" y="194.500" width="7" height="7"/><rect x="939.500" y="194.500" width="7" height="7"/></g>
<text x="776" y="202" textLength="47" lengthAdjust="spacingAndGlyphs">Bảo vệ alpha</text><text x="864" y="202" textLength="28" lengthAdjust="spacingAndGlyphs">Xén bớt</text><text x="951" y="202" textLength="18" lengthAdjust="spacingAndGlyphs">Khóa</text>
<rect x="759" y="208" width="248" height="29" fill="#4e4e4e"/><rect x="759" y="239" width="248" height="28" fill="#4e4e4e"/><rect x="759" y="269" width="248" height="21" fill="#4e4e4e"/>
<rect x="773" y="269" width="234" height="21" fill="#4b98d6"/>
<circle cx="766" cy="223" r="3.500" fill="#ddd"/><circle cx="766" cy="253" r="3.500" fill="#ddd"/><circle cx="766" cy="283" r="3.500" fill="#ddd"/>
<rect x="784" y="213" width="27" height="20" fill="url(#ch2)"/><path d="M786 222q5 2 10 0t13 1" stroke="#f0a0a0" fill="none"/>
<rect x="784" y="243" width="27" height="20" fill="url(#ch2)"/>
<rect x="784" y="273" width="27" height="17" fill="url(#ch2)"/><path d="M800 279h7M788 285h6" stroke="#555"/>
<text x="823" y="227" textLength="20" lengthAdjust="spacingAndGlyphs" style="fill:#ddd">Lớp6</text><text x="823" y="257" textLength="20" lengthAdjust="spacingAndGlyphs" style="fill:#ddd">Lớp7</text><text x="823" y="287" textLength="23" lengthAdjust="spacingAndGlyphs" style="fill:#fff;font-weight:bold">Lớp3</text>
<circle cx="997" cy="283" r="4.500" fill="#fff" stroke="#fff" stroke-width="2" stroke-dasharray="2 1"/><circle cx="997" cy="283" r="1.300" fill="#4b98d6"/>
<rect x="1008" y="208" width="15" height="82" fill="#2a2a2a"/><rect x="1008" y="217" width="14" height="35" rx="3" fill="#666"/>
<path d="M1012 214h6l-3-4zM1012 284h6l-3 4z" fill="#999"/>
<g>
<rect x="761.500" y="293.500" width="17" height="17" rx="2" class="b"/><use href="#doc" x="761" y="293"/>
<rect x="782.500" y="293.500" width="17" height="17" rx="2" class="b"/><use href="#doc" x="782" y="293"/><text x="791" y="306" style="font-size:7px;text-anchor:middle;fill:#ddd">8</text>
<rect x="802.500" y="293.500" width="17" height="17" rx="2" class="b"/><use href="#doc" x="802" y="293"/><text x="811" y="306" style="font-size:7px;text-anchor:middle;fill:#ddd">1</text>
<rect x="822.500" y="293.500" width="22" height="17" rx="2" class="b"/><use href="#doc" x="821" y="293"/><path d="M835 301h5l-2.500 3z" fill="#ddd"/>
<rect x="847.500" y="293.500" width="17" height="17" rx="2" class="b"/><use href="#fold" x="847" y="293"/>
<rect x="868" y="297" width="1" height="10" class="sep"/>
<rect x="873.500" y="293.500" width="17" height="17" rx="2" class="b"/><use href="#dup" x="873" y="293"/>
<rect x="893.500" y="293.500" width="17" height="17" rx="2" class="b"/><rect x="897" y="297" width="5" height="5" fill="none" stroke="#ddd"/><rect x="897" y="303" width="5" height="5" fill="#ddd"/><rect x="904" y="300" width="5" height="4" fill="#ddd"/>
<rect x="914" y="297" width="1" height="10" class="sep"/>
<rect x="919.500" y="293.500" width="17" height="17" rx="2" class="b"/><use href="#tr" x="919" y="293"/>
</g>

<!-- Reference -->
<rect x="757" y="318" width="267" height="72" fill="#232323"/>
<rect x="757" y="318" width="267" height="17" class="t"/><rect x="757" y="318" width="267" height="1" fill="#49708c"/>
<text x="879" y="330" class="c" textLength="37" lengthAdjust="spacingAndGlyphs">Reference</text><use href="#pt" x="1002" y="322"/>
<rect x="760.500" y="337.500" width="17" height="17" rx="2" class="b"/><use href="#up" x="760" y="337"/>
<rect x="780.500" y="337.500" width="17" height="17" rx="2" class="b"/><use href="#fold" x="780" y="337"/>
<rect x="800.500" y="337.500" width="17" height="17" rx="2" class="d"/><path d="M806 343l6 6M812 343l-6 6" stroke="#eee" stroke-width="1.600"/>
<rect x="821" y="340" width="1" height="12" class="sep"/>
<rect x="826.500" y="337.500" width="17" height="17" rx="2" class="d"/><use href="#zp" x="826" y="337"/>
<rect x="846.500" y="337.500" width="17" height="17" rx="2" class="d"/><use href="#fit" x="846" y="337"/>
<rect x="866.500" y="337.500" width="17" height="17" rx="2" class="d"/><use href="#zm" x="866" y="337"/>
<rect x="887" y="340" width="1" height="12" class="sep"/>
<rect x="892.500" y="337.500" width="17" height="17" rx="2" class="d"/><use href="#dr" x="892" y="337"/>
<rect x="912" y="337" width="18" height="18" rx="2" fill="#4b98d6"/><use href="#hand" x="912.500" y="338"/>
<rect x="934" y="340" width="1" height="12" class="sep"/>
<rect x="938.500" y="337.500" width="17" height="17" rx="2" class="d"/><use href="#rl" x="938" y="337"/>
<rect x="958.500" y="337.500" width="17" height="17" rx="2" class="d"/><use href="#fr" x="958" y="337"/>
<rect x="978.500" y="337.500" width="17" height="17" rx="2" class="d"/><use href="#rl" x="978" y="337"/>
<rect x="999" y="340" width="1" height="12" class="sep"/>
<rect x="1004.500" y="337.500" width="17" height="17" rx="2" class="d"/><use href="#fl" x="1004" y="337"/>
<rect x="757" y="357" width="267" height="31" fill="url(#ch)"/>

<!-- Brush Size -->
<rect x="757" y="393" width="267" height="17" class="t"/><rect x="757" y="393" width="267" height="1" fill="#49708c"/>
<text x="879" y="405" class="c" textLength="37" lengthAdjust="spacingAndGlyphs">Brush Size</text><use href="#pt" x="1002" y="397"/>
<rect x="757" y="408" width="252" height="123" fill="#3f3d3b"/>
<g fill="#575757">
<rect x="758" y="408" width="28" height="37"/><rect x="788" y="408" width="28" height="37"/><rect x="818" y="408" width="28" height="37"/><rect x="848" y="408" width="28" height="37"/><rect x="878" y="408" width="28" height="37"/><rect x="908" y="408" width="28" height="37"/><rect x="938" y="408" width="28" height="37"/><rect x="968" y="408" width="28" height="37"/>
<rect x="758" y="446" width="28" height="36"/><rect x="788" y="446" width="28" height="36"/><rect x="818" y="446" width="28" height="36"/><rect x="848" y="446" width="28" height="36"/><rect x="878" y="446" width="28" height="36"/><rect x="908" y="446" width="28" height="36"/><rect x="938" y="446" width="28" height="36"/><rect x="968" y="446" width="28" height="36"/>
<rect x="758" y="484" width="28" height="36"/><rect x="788" y="484" width="28" height="36"/><rect x="818" y="484" width="28" height="36"/><rect x="848" y="484" width="28" height="36"/><rect x="878" y="484" width="28" height="36"/><rect x="908" y="484" width="28" height="36"/><rect x="938" y="484" width="28" height="36"/><rect x="968" y="484" width="28" height="36"/>
</g>
<g fill="#f2f2f2">
<circle cx="772" cy="423" r=".4"/><circle cx="802" cy="423" r=".6"/><circle cx="832" cy="423" r="1"/><circle cx="862" cy="423" r="1.300"/><circle cx="892" cy="423" r="2"/><circle cx="922" cy="423" r="2.200"/><circle cx="952" cy="423" r="3"/><circle cx="982" cy="423" r="4"/>
<circle cx="772" cy="460" r="4.800"/><circle cx="802" cy="460" r="5.800"/><circle cx="832" cy="460" r="7.800"/><circle cx="862" cy="460" r="9"/><circle cx="892" cy="460" r="9"/><circle cx="922" cy="460" r="9"/><circle cx="952" cy="460" r="9"/><circle cx="982" cy="460" r="9"/>
<circle cx="772" cy="498" r="9"/><circle cx="802" cy="498" r="9"/><circle cx="832" cy="498" r="9"/><circle cx="862" cy="498" r="9"/><circle cx="892" cy="498" r="9"/><circle cx="922" cy="498" r="9"/><circle cx="952" cy="498" r="9"/><circle cx="982" cy="498" r="9"/>
</g>
<text class="s" x="772" y="444">1</text><text class="s" x="802" y="444">1.5</text><text class="s" x="832" y="444">2</text><text class="s" x="862" y="444">3</text><text class="s" x="892" y="444">4</text><text class="s" x="922" y="444">5</text><text class="s" x="952" y="444">7</text><text class="s" x="982" y="444">10</text>
<text class="s" x="772" y="481">12</text><text class="s" x="802" y="481">15</text><text class="s" x="832" y="481">20</text><text class="s" x="862" y="481">25</text><text class="s" x="892" y="481">30</text><text class="s" x="922" y="481">40</text><text class="s" x="952" y="481">50</text><text class="s" x="982" y="481">70</text>
<text class="s" x="772" y="519">100</text><text class="s" x="802" y="519">150</text><text class="s" x="832" y="519">200</text><text class="s" x="862" y="519">300</text><text class="s" x="892" y="519">400</text><text class="s" x="922" y="519">500</text><text class="s" x="952" y="519">700</text><text class="s" x="982" y="519">1000</text>
<rect x="1009" y="408" width="15" height="123" fill="#2a2a2a"/><rect x="1009" y="417" width="14" height="105" rx="3" fill="#6a6a68"/>
<path d="M1013 414h6l-3-4zM1013 525h6l-3 4z" fill="#aaa"/>
</svg>
</body></html>
